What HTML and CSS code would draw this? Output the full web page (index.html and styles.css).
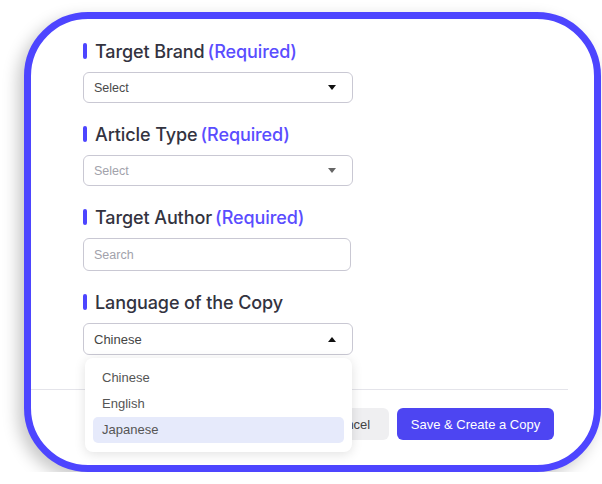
FILE: index.html
```html
<!DOCTYPE html>
<html>
<head>
<meta charset="utf-8">
<link rel="stylesheet" href="styles.css">
</head>
<body>
<div class="stage">
  <div class="frame">
    <div class="form">
      <div class="field">
        <div class="label"><span class="bar"></span>Target Brand<span class="req">(Required)</span></div>
        <div class="select"><span class="val">Select</span><span class="caret down"></span></div>
      </div>
      <div class="field">
        <div class="label"><span class="bar"></span>Article Type<span class="req">(Required)</span></div>
        <div class="select muted"><span class="val">Select</span><span class="caret down"></span></div>
      </div>
      <div class="field">
        <div class="label"><span class="bar"></span>Target Author<span class="req">(Required)</span></div>
        <div class="select input muted"><span class="val">Search</span></div>
      </div>
      <div class="field last">
        <div class="label"><span class="bar"></span>Language of the Copy</div>
        <div class="select open"><span class="val">Chinese</span><span class="caret up"></span></div>
      </div>
    </div>
    <div class="footer">
      <button class="btn cancel">Cancel</button>
      <button class="btn primary">Save &amp; Create a Copy</button>
    </div>
    <div class="menu">
      <div class="item">Chinese</div>
      <div class="item">English</div>
      <div class="item active">Japanese</div>
    </div>
  </div>
</div>
</body>
</html>
```

FILE: styles.css
```css
html, body {
  margin: 0;
  padding: 0;
  background: #ffffff;
}

.stage {
  padding: 12px 0 0 24px;
}

.frame {
  position: relative;
  width: 577px;
  height: 460px;
  box-sizing: border-box;
  border: 7px solid #4d45ff;
  border-radius: 64px;
  background: #ffffff;
  box-shadow: -6px 6px 16px rgba(0, 0, 0, 0.22);
  overflow: hidden;
  font-family: "Liberation Sans", Arial, sans-serif;
}

.form {
  padding: 22px 0 0 52px;
  display: flex;
  flex-direction: column;
  gap: 21px;
}

.field {
  display: flex;
  flex-direction: column;
  gap: 11px;
}

.label {
  display: flex;
  align-items: center;
  height: 20px;
  font-family: Inter, "Noto Sans", sans-serif;
  font-weight: 500;
  font-size: 18px;
  color: #33333f;
  letter-spacing: -0.1px;
}

.bar {
  width: 4px;
  height: 16px;
  border-radius: 2px;
  background: #4d45ff;
  margin-right: 8px;
}

.req {
  color: #5a4dff;
  margin-left: 3px;
}

.select {
  box-sizing: border-box;
  width: 270px;
  height: 31px;
  border: 1px solid #c9c8d3;
  border-radius: 6px;
  display: flex;
  align-items: center;
  justify-content: space-between;
  padding: 0 16px 0 10px;
  font-size: 12.5px;
  color: #4a4a4a;
}

.select.muted {
  color: #a2a2ab;
}

.select.input {
  width: 268px;
  height: 33px;
}

.select.open {
  height: 32px;
  color: #444;
  font-size: 13px;
}

.caret {
  width: 0;
  height: 0;
  border-left: 4.5px solid transparent;
  border-right: 4.5px solid transparent;
}

.caret.down {
  border-top: 5px solid #111;
}

.muted .caret.down {
  border-top-color: #666;
}

.caret.up {
  border-bottom: 5px solid #111;
}

.footer {
  position: absolute;
  left: 0;
  right: 26px;
  top: 370px;
  border-top: 1px solid #e4e4ea;
  display: flex;
  justify-content: flex-end;
  gap: 8px;
  padding-top: 18px;
}

.btn {
  height: 32px;
  border: none;
  border-radius: 6px;
  font-family: "Liberation Sans", Arial, sans-serif;
  font-size: 13px;
  padding: 0;
  white-space: nowrap;
}

.cancel {
  background: #efeff1;
  color: #444;
  width: 78px;
}

.primary {
  background: #4d45f2;
  color: #ffffff;
  width: 157px;
  margin-right: 14px;
}

.menu {
  position: absolute;
  left: 54px;
  top: 339px;
  width: 267px;
  box-sizing: border-box;
  padding: 7px 8px 9px;
  background: #ffffff;
  border-radius: 8px;
  box-shadow: 0 2px 12px rgba(0, 0, 0, 0.12);
}

.item {
  height: 26px;
  line-height: 26px;
  padding-left: 9px;
  font-size: 13px;
  color: #555;
  border-radius: 5px;
}

.item.active {
  background: #e6eafb;
}
```
